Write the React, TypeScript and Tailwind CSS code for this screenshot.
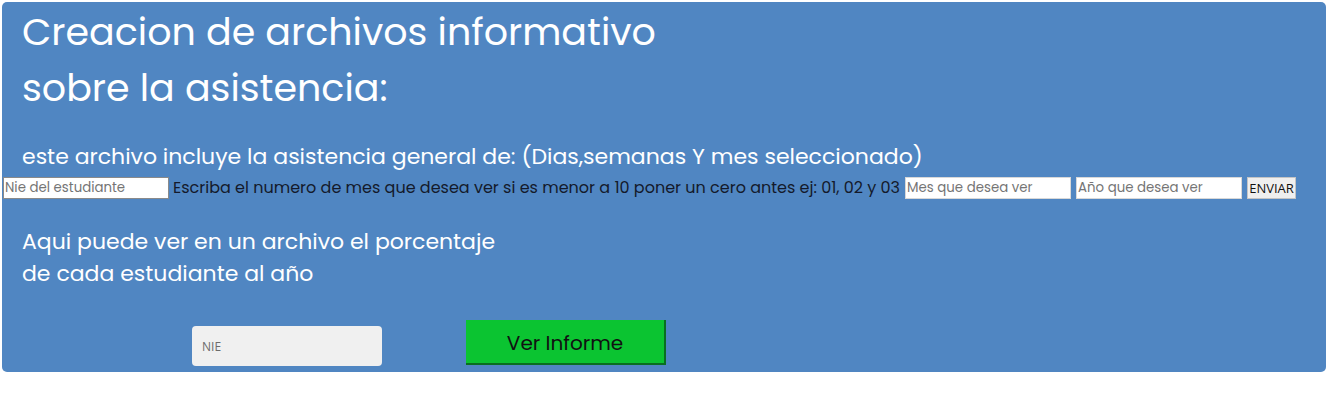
import React from "react";

export default function App() {
  const font = { fontFamily: "Poppins, 'Open Sans', sans-serif" };
  const inputCls =
    "w-[166px] h-[22px] bg-white px-[1px] text-[13.333px] placeholder:text-[#757575] outline-none";
  return (
    <div className="w-[1330px] h-[420px] bg-white pt-[2px] pl-[2px]" style={font}>
      <div className="w-[1324px] h-[370px] bg-[#5086c2] rounded-[5px] relative">
        <h1 className="pl-[20px] pt-[2px] text-[38px] leading-[56px] text-white font-normal">
          <div>Creacion de archivos informativo</div>
          <div>sobre la asistencia:</div>
        </h1>
        <p className="mt-[26px] pl-[20px] text-[22px] leading-[30px] text-white">
          este archivo incluye la asistencia general de: (Dias,semanas Y mes seleccionado)
        </p>
        <div className="mt-[5px] flex items-center h-[22px]">
          <input
            placeholder="Nie del estudiante"
            className={"ml-[1px] border border-[#8a8a8a] " + inputCls}
          />
          <span className="ml-[4px] text-[16px] text-[#141a2b] whitespace-nowrap">
            Escriba el numero de mes que desea ver si es menor a 10 poner un cero antes ej: 01, 02 y 03
          </span>
          <input
            placeholder="Mes que desea ver"
            className={"ml-[5px] border border-[#d8d8d8] " + inputCls}
          />
          <input
            placeholder="Año que desea ver"
            className={"ml-[5px] border border-[#d8d8d8] " + inputCls}
          />
          <button
            className="ml-[5px] w-[49px] h-[22px] bg-[#efefef] border border-[#c4c4c4] text-[13px] text-[#111] leading-none px-0"
            style={{ fontFamily: "'Open Sans', sans-serif" }}
          >
            ENVIAR
          </button>
        </div>
        <p className="mt-[27px] pl-[20px] text-[22px] leading-[32px] text-white">
          Aqui puede ver en un archivo el porcentaje
          <br />
          de cada estudiante al año
        </p>
        <div className="mt-[30px] flex items-start">
          <input
            placeholder="NIE"
            className="ml-[190px] mt-[6px] w-[190px] h-[40px] bg-[#f0f0f0] rounded-[4px] px-[10px] text-[12px] placeholder:text-[#6b6b6b] outline-none"
            style={{ fontFamily: "'Open Sans', sans-serif" }}
          />
          <button className="ml-[84px] w-[200px] h-[45px] pt-[3px] bg-[#0bc431] border-b-[2px] border-r-[2px] border-[#0a6e20] text-[20px] text-[#111]">
            Ver Informe
          </button>
        </div>
      </div>
    </div>
  );
}
